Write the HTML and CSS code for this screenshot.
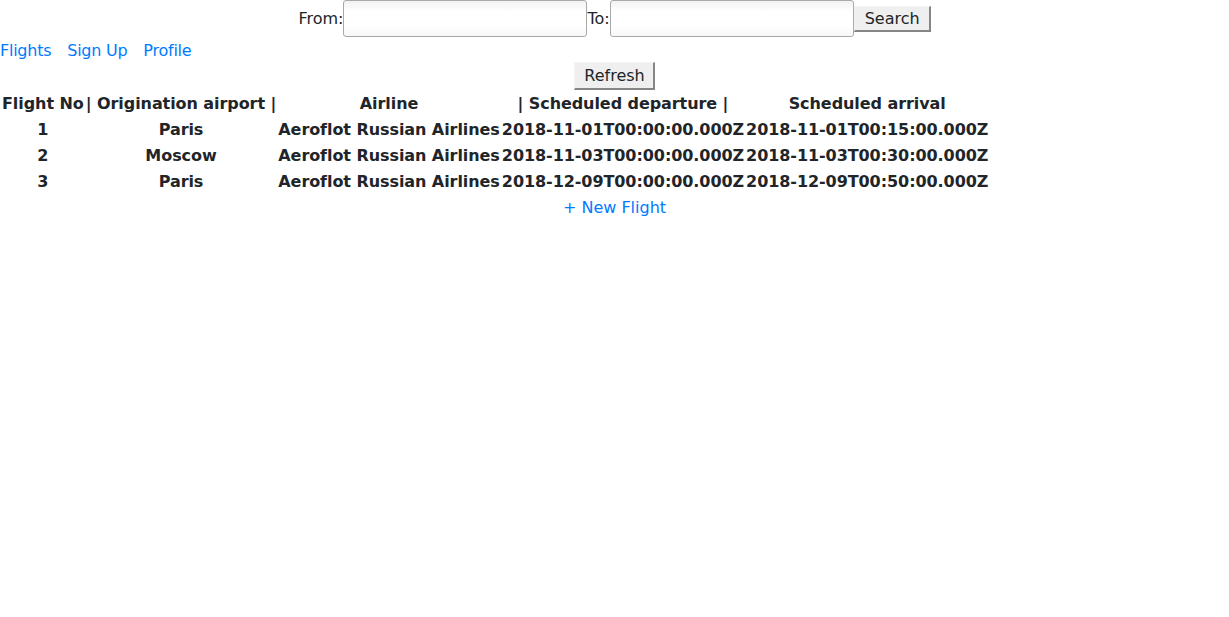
FILE: index.html
```html
<!DOCTYPE html>
<html>
<head>
<meta charset="utf-8">
<link rel="stylesheet" href="styles.css">
</head>
<body>
<form class="search">
  <label class="lbl">From:</label><input class="field" type="text"><label class="lbl">To:</label><input class="field" type="text"><button class="btn" type="button">Search</button>
</form>
<nav class="nav">
  <a href="#">Flights</a>
  <a href="#">Sign Up</a>
  <a href="#">Profile</a>
</nav>
<div class="center">
  <button class="btn btn-refresh" type="button">Refresh</button>
</div>
<table class="flights">
  <thead>
    <tr><th>Flight No</th><th>| Origination airport |</th><th>Airline</th><th>| Scheduled departure |</th><th>Scheduled arrival</th></tr>
  </thead>
  <tbody>
    <tr><th>1</th><th>Paris</th><th>Aeroflot Russian Airlines</th><th>2018-11-01T00:00:00.000Z</th><th>2018-11-01T00:15:00.000Z</th></tr>
    <tr><th>2</th><th>Moscow</th><th>Aeroflot Russian Airlines</th><th>2018-11-03T00:00:00.000Z</th><th>2018-11-03T00:30:00.000Z</th></tr>
    <tr><th>3</th><th>Paris</th><th>Aeroflot Russian Airlines</th><th>2018-12-09T00:00:00.000Z</th><th>2018-12-09T00:50:00.000Z</th></tr>
  </tbody>
</table>
<div class="center">
  <a class="new" href="#">+ New Flight</a>
</div>
</body>
</html>
```
FILE: styles.css
```css
html, body {
  margin: 0;
  padding: 0;
}
body {
  font-family: "DejaVu Sans", sans-serif;
  font-size: 16px;
  line-height: 1.5;
  color: #212529;
  background: #fff;
}
a {
  color: #007bff;
  text-decoration: none;
}
.search {
  display: flex;
  justify-content: center;
  align-items: center;
  height: 38px;
  margin: 0;
}
.lbl {
  line-height: 24px;
}
.field {
  box-sizing: border-box;
  width: 244px;
  height: 37px;
  margin: 0;
  border: 1px solid #a9a9a9;
  border-radius: 3px;
  background: linear-gradient(#f2f2f2, #ffffff 30%, #ffffff 70%, #f7f7f7);
  font: inherit;
  align-self: flex-start;
}
.btn {
  box-sizing: border-box;
  font-family: "DejaVu Sans", sans-serif;
  font-size: 16px;
  line-height: 20px;
  color: #212529;
  background: #efefef;
  border-style: solid;
  border-width: 1px 2px 2px 1px;
  border-color: #f4f4f4 #858585 #858585 #f4f4f4;
  padding: 1px 9px 1px 10px;
  height: 26px;
  margin: 0;
}
.nav {
  display: flex;
  gap: 16px;
  height: 24px;
  padding-top: 1px;
  letter-spacing: -0.25px;
}
.center {
  text-align: center;
}
.btn-refresh {
  height: 28px;
  padding: 2px 8px 2px 9px;
  margin-top: -1px;
  vertical-align: top;
}
.flights {
  border-spacing: 2px;
}
.flights th {
  padding: 0;
  font-weight: bold;
  text-align: center;
  line-height: 24px;
  letter-spacing: -0.07px;
}
.new {
  display: inline-block;
  line-height: 24px;
  margin-top: -1px;
}
```
